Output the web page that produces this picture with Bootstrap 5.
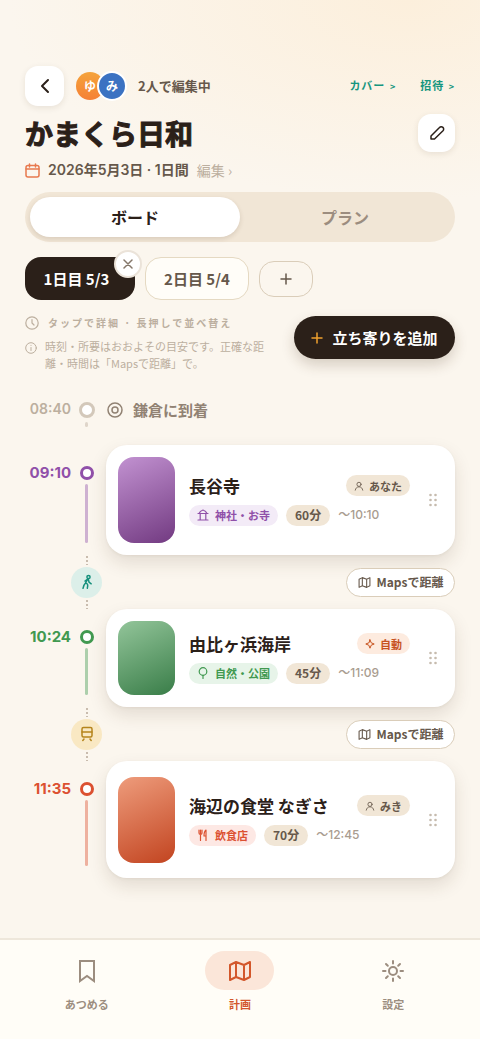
<!DOCTYPE html>
<html lang="ja">
<head>
<meta charset="utf-8">
<meta name="viewport" content="width=device-width, initial-scale=1">
<title>かまくら日和</title>
<link href="https://cdn.jsdelivr.net/npm/bootstrap@5.3.0/dist/css/bootstrap.min.css" rel="stylesheet">
<style>
:root{--ink:#2b2019;--brown:#66584b;--muted:#9c8d7f;--faint:#bcaf9f;--sand:#f1e6d6;--edge:#dacdb9;--orange:#d3572b}
body{font-family:"Noto Sans CJK JP",sans-serif;color:var(--ink);background:radial-gradient(ellipse 400px 200px at 85% 0,#fcefdc,rgba(252,239,220,0)) no-repeat,#fbf6ee;font-size:14px;line-height:20px}
button{font-family:inherit;border:0;background:none;padding:0;color:inherit}
a{text-decoration:none}
svg{fill:none;stroke:currentColor;stroke-width:2;stroke-linecap:round;stroke-linejoin:round;flex-shrink:0;display:block}
.s1{stroke-width:1}
.s12{stroke-width:1.2}
.s15{stroke-width:1.5}
.s3{stroke-width:3}
.screen{padding:66px 25px 40px}
.tile{background:#fff;border-radius:13px;box-shadow:0 2px 6px rgba(70,45,20,.1)}
.tile-back{width:39px;height:40px}
.tile-edit{width:37px;height:38px}
.face{width:28px;height:28px;color:#fff;font-size:12px;font-weight:700}
.face-a{background:linear-gradient(#f5a33b,#f58035)}
.face-b{width:30px;height:30px;background:#3b72c2;margin-left:-7px;border:2px solid #fff}
.editors{font-size:13px;font-weight:700;color:var(--brown);margin-left:11px}
.toplink{color:#16967f;font-size:11px;font-weight:700;letter-spacing:1px}
.toplink small{font-size:9px;margin-left:1px}
.trip-name{font-size:28px;line-height:38px;font-weight:700;-webkit-text-stroke:1px var(--ink)}
.trip-date{font-size:14px;font-weight:600;color:var(--brown)}
.num{font-family:Inter,"Noto Sans CJK JP",sans-serif}
.switch-bar{background:var(--sand);border-radius:25px;padding:5px;height:50px;margin-top:12px}
.switch-bar button{border-radius:21px;font-size:16px;font-weight:700;color:var(--muted)}
.switch-bar .on{background:#fff;color:var(--ink);box-shadow:0 2px 5px rgba(70,45,20,.14)}
.days{gap:10px;margin-top:15px}
.day{display:block;height:43px;border-radius:16px;font-size:15px;font-weight:700}
.day-on{background:var(--ink);color:#fff;width:110px;padding-right:7px}
.day-off{background:#fffdf8;border:1px solid #e5d9c2;color:var(--brown);width:104px}
.day-new{width:54px;height:36px;border:1px solid var(--edge);border-radius:15px;color:var(--brown)}
.day-close{width:28px;height:28px;top:-7px;right:-7px;background:#fff;border:2px solid #ebe3d9;color:#85776a}
.hints{margin-top:16px;column-gap:22px}
.hint{color:var(--faint);font-size:11px;line-height:17px}
.hint-tap{font-size:10px;line-height:14px;font-weight:700;letter-spacing:2px;margin-left:9px}
.add-stop{background:var(--ink);color:#fff;border-radius:22px;height:43px;width:161px;font-size:15px;font-weight:700;gap:9px;box-shadow:0 6px 14px rgba(70,45,20,.2)}
.line-row{display:grid;grid-template-columns:46px 31px minmax(0,1fr)}
.line-row>:last-child{margin-left:4px}
.clock{font-size:15px;line-height:18px;font-weight:700;color:var(--tone);text-align:right;white-space:nowrap}
.ring{width:14px;height:14px;border:3px solid var(--tone);border-radius:50%;background:#fff;flex-shrink:0}
.bar{width:3px;border-radius:2px;background:var(--tone);opacity:.42;margin-top:4px}
.arrival{--tone:#d3c8ba;margin-top:28px}
.arrival .clock{font-size:14px;font-weight:600;color:var(--faint)}
.ring-lg{width:16px;height:16px;margin-top:2px}
.bar-mini{height:5px;opacity:.7}
.arrival-name{height:20px;color:#918273;font-size:15px;font-weight:700;padding-left:1px;gap:10px}
.dots{width:2px;height:10px;background:radial-gradient(circle,#c9bcae 1px,transparent 1px) 0 0/2px 4px}
.mover{width:31px;height:31px}
.walk{background:#dcefe9;color:#16907c}
.train{background:#f9e8c3;color:#b5841c}
.stop{background:#fff;border-radius:21px;box-shadow:0 8px 18px rgba(70,45,20,.13),0 1px 3px rgba(70,45,20,.06);padding:12px 18px 12px 12px}
.thumb{width:57px;border-radius:16px;background:linear-gradient(155deg,var(--hi),var(--lo))}
.purple{--tone:#9050a9;--soft:#f3ebf7;--hi:#c292d1;--lo:#723a81;margin-top:18px}
.green{--tone:#419950;--soft:#e7f4e9;--hi:#93c59a;--lo:#397d48}
.red{--tone:#dc5131;--soft:#fde8e4;--hi:#ee9c7c;--lo:#c24420}
.purple .thumb{height:86px}
.green .thumb{height:74px}
.red .thumb{height:86px}
.red .stop{padding-top:16px;padding-bottom:15px}
.stamp{margin-top:19px}
.rail{padding:21px 0 12px}
.stop-body{margin:0 19px 0 14px;min-width:0}
.stop-name{font-size:17px;line-height:22px;font-weight:700}
.meta{gap:8px;margin-top:8px}
.pill{border-radius:11px;height:21px;padding:0 9px;font-size:12px;font-weight:700;background:var(--sand);color:var(--brown);white-space:nowrap}
.pill-kind{background:var(--soft);color:var(--tone);font-size:11px;padding:0 8px;gap:6px}
.pill-who{font-size:11px;padding:0 8px;gap:5px}
.pill-auto{background:#fdebdf;color:#c7531f}
.until{font-size:12px;font-weight:500;color:#a99c8f}
.hop{height:54px}
.maps{height:29px;width:109px;border:1px solid var(--edge);border-radius:15px;background:#fff;font-size:12px;font-weight:700;color:var(--brown);gap:6px}
.tabs-foot{background:#fffdf7;border-top:2px solid #eee7db;height:101px;padding:11px 10px 0}
.tabs-foot a{color:var(--muted);font-size:11px;font-weight:700}
.tabs-foot .here{color:var(--orange)}
.bubble{width:69px;height:39px;border-radius:20px}
.here .bubble{background:#fbe6d9}
</style>
</head>
<body class="d-flex flex-column min-vh-100">
<svg width="0" height="0" class="position-absolute" aria-hidden="true">
  <symbol id="map" viewBox="0 0 24 24"><path d="M2 6l6-3 8 3 6-3v15l-6 3-8-3-6 3zM8 3v15M16 6v15"/></symbol>
  <symbol id="person" viewBox="0 0 24 24"><circle cx="12" cy="8" r="5"/><path d="M3 22c1-5 4-8 9-8s8 3 9 8"/></symbol>
  <symbol id="plus" viewBox="0 0 24 24"><path d="M12 2v20M2 12h20"/></symbol>
  <symbol id="grip" viewBox="0 0 8 14"><g fill="#c6bbae" stroke="none"><circle cx="1.5" cy="2" r="1.3"/><circle cx="6.5" cy="2" r="1.3"/><circle cx="1.5" cy="7" r="1.3"/><circle cx="6.5" cy="7" r="1.3"/><circle cx="1.5" cy="12" r="1.3"/><circle cx="6.5" cy="12" r="1.3"/></g></symbol>
</svg>

<main class="screen flex-grow-1">
  <header>
    <div class="d-flex align-items-center">
      <button class="tile tile-back d-flex align-items-center justify-content-center" aria-label="戻る"><svg width="20" height="20" viewBox="0 0 20 20"><path d="M13 4L7 10l6 6"/></svg></button>
      <div class="d-flex align-items-center ms-2 ps-1">
        <span class="face face-a rounded-circle d-flex align-items-center justify-content-center">ゆ</span>
        <span class="face face-b rounded-circle d-flex align-items-center justify-content-center">み</span>
      </div>
      <span class="editors">2人で編集中</span>
      <a class="toplink ms-auto" href="#cover">カバー <small>&gt;</small></a>
      <a class="toplink ms-4" href="#invite">招待 <small>&gt;</small></a>
    </div>
    <div class="d-flex align-items-center justify-content-between mt-2">
      <h1 class="trip-name m-0">かまくら日和</h1>
      <button class="tile tile-edit d-flex align-items-center justify-content-center" aria-label="名前を編集"><svg class="s15" width="16" height="16" viewBox="0 0 16 16"><path d="M2 11l8.500-8.500a2.300 2.300 0 0 1 3.500 3.300L5.500 14 2 14z"/></svg></button>
    </div>
    <div class="d-flex align-items-center mt-2 trip-date">
      <svg class="s15" width="15" height="15" viewBox="0 0 15 15" style="color:#e8794e"><rect x="1" y="2.500" width="13" height="11.500" rx="2"/><path d="M1 6h13M4.500 1v3M10.500 1v3"/></svg>
      <span class="ms-2 num">2026年5月3日 · 1日間</span>
      <a class="ms-2 fw-normal" href="#dates" style="color:var(--faint)">編集 ›</a>
    </div>
  </header>

  <div class="switch-bar d-flex">
    <button class="on flex-fill w-50">ボード</button>
    <button class="flex-fill w-50">プラン</button>
  </div>

  <div class="days d-flex align-items-center">
    <div class="position-relative">
      <button class="day day-on">1日目 5/3</button>
      <button class="day-close position-absolute rounded-circle d-flex align-items-center justify-content-center" aria-label="1日目を削除"><svg class="s15" width="10" height="10" viewBox="0 0 10 10"><path d="M1 1l8 8M9 1L1 9"/></svg></button>
    </div>
    <button class="day day-off">2日目 5/4</button>
    <button class="day-new d-flex align-items-center justify-content-center" aria-label="日を追加"><svg class="s3" width="12" height="12"><use href="#plus"/></svg></button>
  </div>

  <div class="hints d-flex justify-content-between">
    <div class="hint">
      <div class="d-flex align-items-center"><svg class="s12" width="14" height="14" viewBox="0 0 14 14"><circle cx="7" cy="7" r="6.200"/><path d="M7 3.500V7l2 2"/></svg><span class="hint-tap">タップで詳細 · 長押しで並べ替え</span></div>
      <div class="d-flex mt-2"><svg class="s1 mt-1" width="12" height="12" viewBox="0 0 12 12"><circle cx="6" cy="6" r="5.300"/><path d="M6 5.500v3M6 3.300v.1"/></svg><span class="ms-2">時刻・所要はおおよその目安です。正確な距離・時間は「Mapsで距離」で。</span></div>
    </div>
    <button class="add-stop d-flex align-items-center justify-content-center flex-shrink-0"><svg class="s3" width="12" height="12" style="color:#f0a02e"><use href="#plus"/></svg><span>立ち寄りを追加</span></button>
  </div>

  <section>
    <div class="line-row arrival">
      <div class="clock num">08:40</div>
      <div class="d-flex flex-column align-items-center"><span class="ring ring-lg"></span><span class="bar bar-mini"></span></div>
      <div class="d-flex align-items-center arrival-name"><svg class="s15" width="16" height="16" viewBox="0 0 16 16"><circle cx="8" cy="8" r="7"/><circle cx="8" cy="8" r="3"/></svg><span>鎌倉に到着</span></div>
    </div>

    <div class="line-row purple">
      <div class="clock num stamp">09:10</div>
      <div class="d-flex flex-column align-items-center rail"><span class="ring"></span><span class="bar flex-grow-1"></span></div>
      <article class="stop d-flex align-items-center">
        <div class="thumb flex-shrink-0"></div>
        <div class="stop-body flex-grow-1">
          <div class="d-flex align-items-center justify-content-between"><h2 class="stop-name m-0">長谷寺</h2><span class="pill pill-who d-flex align-items-center"><svg width="10" height="10"><use href="#person"/></svg>あなた</span></div>
          <div class="d-flex align-items-center meta"><span class="pill pill-kind d-flex align-items-center"><svg class="s12" width="12" height="12" viewBox="0 0 12 12"><path d="M1 4.500h10M2 4.500Q3 1.800 6 1q3 .8 4 3.500M3.200 4.500V11M8.800 4.500V11M1 11h10"/></svg><span>神社・お寺</span></span><span class="pill d-flex align-items-center">60分</span><span class="until num">〜10:10</span></div>
        </div>
        <svg width="8" height="14"><use href="#grip"/></svg>
      </article>
    </div>

    <div class="line-row hop">
      <span></span>
      <div class="d-flex flex-column align-items-center justify-content-between"><span class="dots"></span><span class="mover walk rounded-circle d-flex align-items-center justify-content-center"><svg class="s15" width="14" height="16" viewBox="0 0 14 16"><circle cx="8.500" cy="3" r="1.600"/><path d="M7.800 4.800L5.500 9M8.300 5l.7 3.200 2.200 1.600M5.500 9Q3.800 10.500 3 14.300M5.500 9q3.200.5 1.800 5.300M7 5.500L5 7"/></svg></span><span class="dots"></span></div>
      <div class="d-flex align-items-center justify-content-end"><button class="maps d-flex align-items-center justify-content-center"><svg width="13" height="13"><use href="#map"/></svg><span>Mapsで距離</span></button></div>
    </div>

    <div class="line-row green">
      <div class="clock num stamp">10:24</div>
      <div class="d-flex flex-column align-items-center rail"><span class="ring"></span><span class="bar flex-grow-1"></span></div>
      <article class="stop d-flex align-items-center">
        <div class="thumb flex-shrink-0"></div>
        <div class="stop-body flex-grow-1">
          <div class="d-flex align-items-center justify-content-between"><h2 class="stop-name m-0">由比ヶ浜海岸</h2><span class="pill pill-who pill-auto d-flex align-items-center"><svg class="s1" width="10" height="10" viewBox="0 0 10 10"><path d="M5 .8L6.200 3.800 9.200 5l-3 1.200L5 9.200 3.800 6.200.8 5l3-1.200z"/></svg>自動</span></div>
          <div class="d-flex align-items-center meta"><span class="pill pill-kind d-flex align-items-center"><svg class="s12" width="12" height="12" viewBox="0 0 12 12"><circle cx="6" cy="4.500" r="3.800"/><path d="M6 8.300v3.200"/></svg><span>自然・公園</span></span><span class="pill d-flex align-items-center">45分</span><span class="until num">〜11:09</span></div>
        </div>
        <svg width="8" height="14"><use href="#grip"/></svg>
      </article>
    </div>

    <div class="line-row hop">
      <span></span>
      <div class="d-flex flex-column align-items-center justify-content-between"><span class="dots"></span><span class="mover train rounded-circle d-flex align-items-center justify-content-center"><svg class="s15" width="14" height="16" viewBox="0 0 14 16"><rect x="2" y="1.500" width="10" height="9.500" rx="1.500"/><path d="M2 6h10M4 13l-1.200 1.500M10 13l1.200 1.500"/></svg></span><span class="dots"></span></div>
      <div class="d-flex align-items-center justify-content-end"><button class="maps d-flex align-items-center justify-content-center"><svg width="13" height="13"><use href="#map"/></svg><span>Mapsで距離</span></button></div>
    </div>

    <div class="line-row red">
      <div class="clock num stamp">11:35</div>
      <div class="d-flex flex-column align-items-center rail"><span class="ring"></span><span class="bar flex-grow-1"></span></div>
      <article class="stop d-flex align-items-center">
        <div class="thumb flex-shrink-0"></div>
        <div class="stop-body flex-grow-1">
          <div class="d-flex align-items-center justify-content-between"><h2 class="stop-name m-0">海辺の食堂 なぎさ</h2><span class="pill pill-who d-flex align-items-center"><svg width="10" height="10"><use href="#person"/></svg>みき</span></div>
          <div class="d-flex align-items-center meta"><span class="pill pill-kind d-flex align-items-center"><svg class="s12" width="12" height="12" viewBox="0 0 12 12"><path d="M2 1v3q0 1.500 1.500 1.500T5 4V1M3.500 1v10.500M9 11.500V1Q7 2.500 7 7h2"/></svg><span>飲食店</span></span><span class="pill d-flex align-items-center">70分</span><span class="until num">〜12:45</span></div>
        </div>
        <svg width="8" height="14"><use href="#grip"/></svg>
      </article>
    </div>
  </section>
</main>

<nav class="tabs-foot d-flex sticky-bottom">
  <a class="w-100 d-flex flex-column align-items-center" href="#collect"><span class="bubble d-flex align-items-center justify-content-center"><svg width="24" height="24" viewBox="0 0 24 24"><path d="M5 2h14v20l-7-5-7 5z" stroke-linejoin="miter"/></svg></span><span class="mt-1">あつめる</span></a>
  <a class="w-100 d-flex flex-column align-items-center here" href="#plan" aria-current="page"><span class="bubble d-flex align-items-center justify-content-center"><svg width="24" height="24"><use href="#map"/></svg></span><span class="mt-1">計画</span></a>
  <a class="w-100 d-flex flex-column align-items-center" href="#settings"><span class="bubble d-flex align-items-center justify-content-center"><svg width="24" height="24" viewBox="0 0 24 24"><circle cx="12" cy="12" r="4"/><path d="M12 2v2.500M12 19.500V22M2 12h2.500M19.500 12H22M5 5l1.800 1.800M17.200 17.200L19 19M19 5l-1.800 1.800M6.800 17.200L5 19"/></svg></span><span class="mt-1">設定</span></a>
</nav>
<script src="https://cdn.jsdelivr.net/npm/bootstrap@5.3.0/dist/js/bootstrap.bundle.min.js"></script>
</body>
</html>
